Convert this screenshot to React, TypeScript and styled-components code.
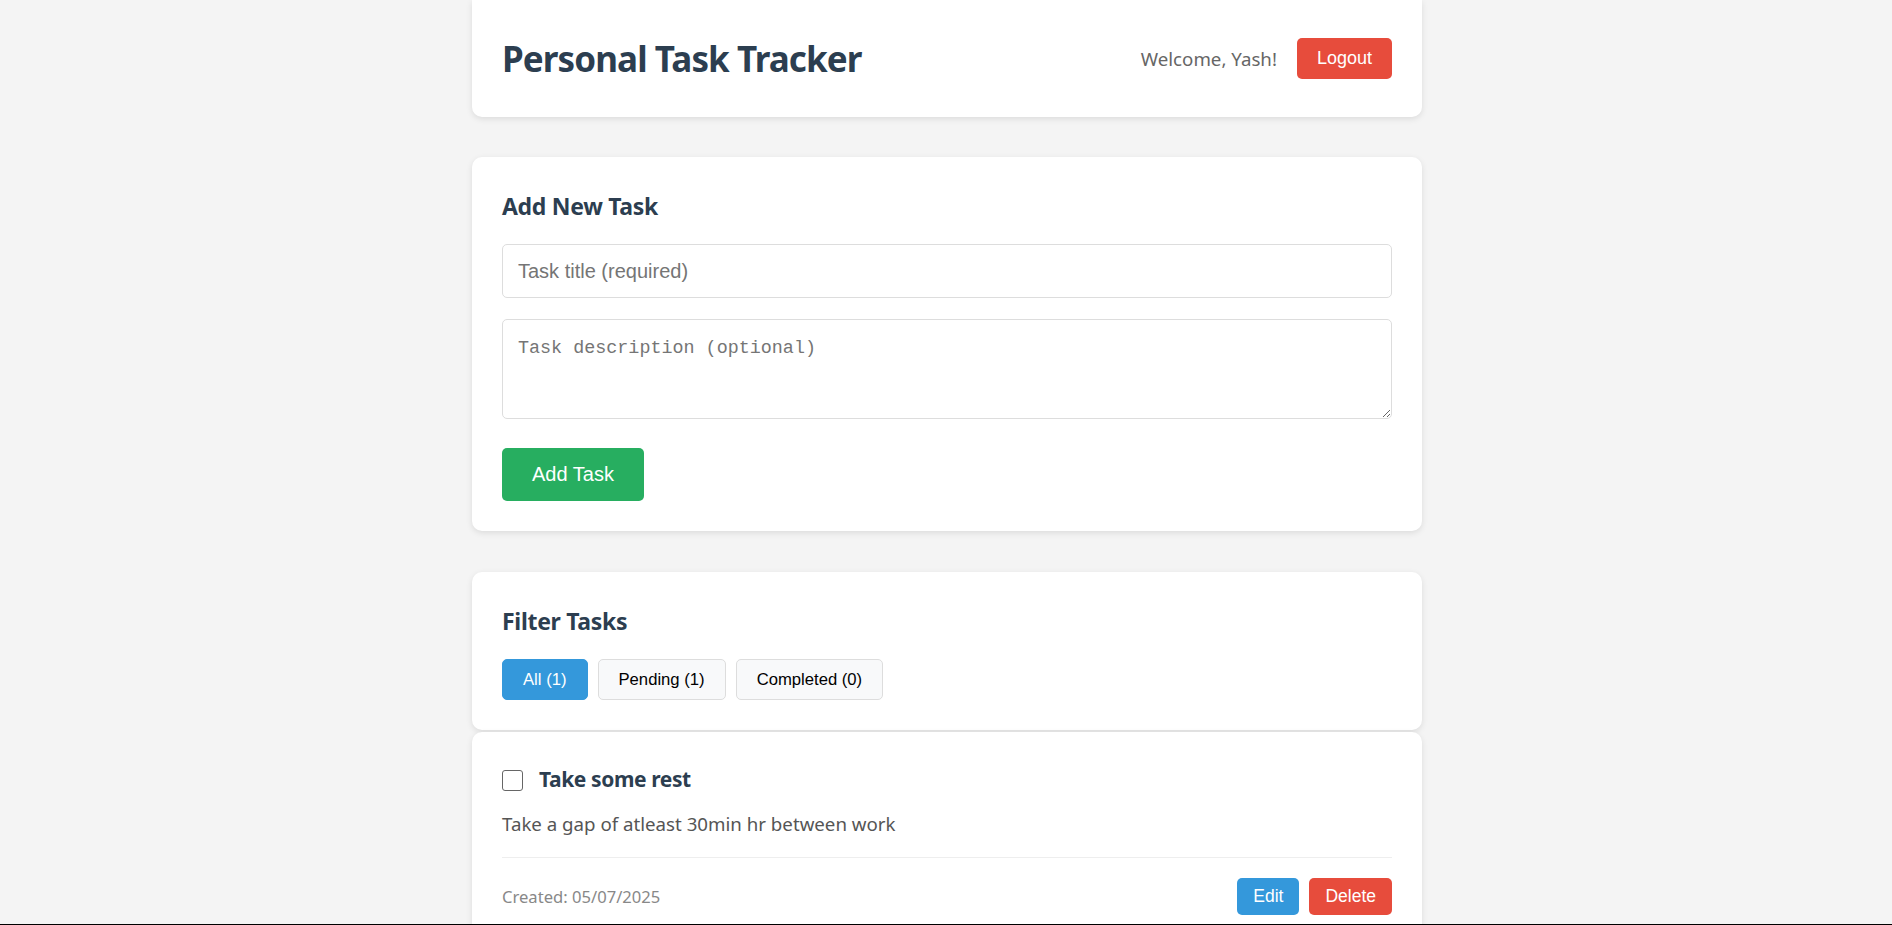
import React, { useState } from "react";
import styled, { createGlobalStyle } from "styled-components";

const GlobalStyle = createGlobalStyle`
  html, body {
    margin: 0;
    padding: 0;
    background: #f4f4f4;
    font-family: "Noto Sans", "Open Sans", sans-serif;
  }
  * { box-sizing: border-box; }
`;

const Container = styled.div`
  width: 952px;
  padding-left: 2px;
  margin: 0 auto;
  padding-bottom: 40px;
`;

const Card = styled.section<{ $gap?: number }>`
  background: #ffffff;
  border-radius: 10px;
  box-shadow: 0 2px 6px rgba(0, 0, 0, 0.1);
  padding: 30px;
  margin-top: ${(p) => p.$gap ?? 0}px;
`;

const HeaderCard = styled.header`
  background: #ffffff;
  border-radius: 0 0 10px 10px;
  box-shadow: 0 2px 6px rgba(0, 0, 0, 0.1);
  height: 117px;
  padding: 0 30px;
  display: flex;
  align-items: center;
  justify-content: space-between;
`;

const Title = styled.h1`
  margin: 0;
  font-size: 35px;
  font-weight: 700;
  color: #2c3e50;
  letter-spacing: -0.9px;
`;

const UserBox = styled.div`
  display: flex;
  align-items: center;
  gap: 20px;
`;

const Welcome = styled.span`
  font-size: 18.7px;
  color: #666;
`;

const Button = styled.button<{ $bg: string; $h: number; $px: number; $fs: number }>`
  background: ${(p) => p.$bg};
  color: #fff;
  border: none;
  border-radius: 5px;
  height: ${(p) => p.$h}px;
  padding: 0 ${(p) => p.$px}px;
  font-family: "Liberation Sans", Arial, sans-serif;
  font-size: ${(p) => p.$fs}px;
  cursor: pointer;
`;

const SectionTitle = styled.h2`
  margin: 0 0 19px;
  font-size: 23px;
  line-height: 38px;
  font-weight: 700;
  color: #2c3e50;
  letter-spacing: -0.3px;
`;

const TextInput = styled.input`
  display: block;
  width: 100%;
  height: 54px;
  padding: 0 15px;
  border: 1px solid #ddd;
  border-radius: 5px;
  font-family: "Liberation Sans", Arial, sans-serif;
  font-size: 20px;
  color: #333;
  outline: none;
  &::placeholder { color: #757575; }
`;

const TextArea = styled.textarea`
  display: block;
  width: 100%;
  height: 100px;
  margin-top: 21px;
  padding: 18px 15px 10px;
  border: 1px solid #ddd;
  border-radius: 5px;
  font-family: "Liberation Mono", "DejaVu Sans Mono", monospace;
  font-size: 18.4px;
  color: #333;
  outline: none;
  resize: vertical;
  &::placeholder { color: #757575; }
`;

const SubmitRow = styled.div`
  margin-top: 29px;
  display: flex;
`;

const FilterRow = styled.div`
  display: flex;
  gap: 10px;
`;

const FilterButton = styled.button<{ $active?: boolean }>`
  height: 41px;
  padding: 0 20px;
  border-radius: 5px;
  border: 1px solid ${(p) => (p.$active ? "#3498db" : "#ddd")};
  background: ${(p) => (p.$active ? "#3498db" : "#f8f9fa")};
  color: ${(p) => (p.$active ? "#fff" : "#000")};
  font-family: "Liberation Sans", Arial, sans-serif;
  font-size: 16.67px;
  cursor: pointer;
`;

const TaskHead = styled.div`
  display: flex;
  align-items: center;
  gap: 16px;
  height: 36px;
`;

const Check = styled.input`
  appearance: none;
  margin: 0;
  width: 21px;
  height: 21px;
  border: 1.5px solid #666;
  border-radius: 3px;
  background: #fff;
`;

const TaskTitle = styled.h3`
  margin: -3px 0 0;
  font-size: 21px;
  font-weight: 700;
  color: #2c3e50;
  letter-spacing: -0.4px;
`;

const TaskDesc = styled.p`
  margin: 10px 0 0;
  font-size: 18.7px;
  line-height: 32px;
  color: #555;
`;

const TaskFooter = styled.div`
  margin-top: 17px;
  border-top: 1px solid #eee;
  padding-top: 20px;
  display: flex;
  align-items: center;
  justify-content: space-between;
`;

const Created = styled.span`
  font-size: 16.6px;
  color: #888;
`;

const Actions = styled.div`
  display: flex;
  gap: 10px;
`;

const BottomEdge = styled.div`
  position: fixed;
  left: 0;
  right: 0;
  bottom: 0;
  height: 1px;
  background: #000;
`;

export default function App() {
  const [title, setTitle] = useState("");
  const [desc, setDesc] = useState("");
  return (
    <>
      <GlobalStyle />
      <Container>
        <HeaderCard>
          <Title>Personal Task Tracker</Title>
          <UserBox>
            <Welcome>Welcome, Yash!</Welcome>
            <Button $bg="#e74c3c" $h={41} $px={20} $fs={18}>Logout</Button>
          </UserBox>
        </HeaderCard>

        <Card $gap={40}>
          <SectionTitle>Add New Task</SectionTitle>
          <TextInput
            placeholder="Task title (required)"
            value={title}
            onChange={(e) => setTitle(e.target.value)}
          />
          <TextArea
            placeholder="Task description (optional)"
            value={desc}
            onChange={(e) => setDesc(e.target.value)}
          />
          <SubmitRow>
            <Button $bg="#27ae60" $h={53} $px={30} $fs={20}>Add Task</Button>
          </SubmitRow>
        </Card>

        <Card $gap={41}>
          <SectionTitle>Filter Tasks</SectionTitle>
          <FilterRow>
            <FilterButton $active>All (1)</FilterButton>
            <FilterButton>Pending (1)</FilterButton>
            <FilterButton>Completed (0)</FilterButton>
          </FilterRow>
        </Card>

        <Card $gap={2}>
          <TaskHead>
            <Check type="checkbox" />
            <TaskTitle>Take some rest</TaskTitle>
          </TaskHead>
          <TaskDesc>Take a gap of atleast 30min hr between work</TaskDesc>
          <TaskFooter>
            <Created>Created: 05/07/2025</Created>
            <Actions>
              <Button $bg="#3498db" $h={37} $px={16} $fs={17.5}>Edit</Button>
              <Button $bg="#e74c3c" $h={37} $px={16} $fs={17.5}>Delete</Button>
            </Actions>
          </TaskFooter>
        </Card>
      </Container>
      <BottomEdge />
    </>
  );
}
